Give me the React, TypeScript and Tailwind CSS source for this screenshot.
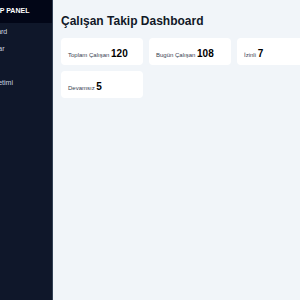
import React from "react";

const stats = [
  { label: "Toplam Çalışan", value: "120" },
  { label: "Bugün Çalışan", value: "108" },
  { label: "İzinli", value: "7" },
  { label: "Devamsız", value: "5" },
];

const menu = ["Dashboard", "Çalışanlar", "İzinler", "İzin Yönetimi"];

export default function App() {
  return (
    <div
      className="flex h-[300px] w-[300px] overflow-hidden bg-[#f1f5f9]"
      style={{ fontFamily: '"Liberation Sans", Arial, sans-serif' }}
    >
      <aside className="-ml-[47px] flex w-[100px] shrink-0 flex-col border-r border-[#334155] bg-[#0f172a]">
        <div className="flex h-[23px] items-center bg-[#020617] pb-[1px] pl-[37px] text-[7px] font-bold text-white">
          ERP PANEL
        </div>
        <nav className="flex flex-col">
          {menu.map((m) => (
            <div key={m} className="whitespace-nowrap pl-[20px] text-[7px] leading-[17px] text-[#cbd5e1]">
              {m}
            </div>
          ))}
        </nav>
      </aside>
      <main className="min-w-0 flex-1 pl-[8px] pt-[14px]">
        <h1 className="mb-[10px] whitespace-nowrap text-[12px] font-bold leading-[14px] text-[#111827]">
          Çalışan Takip Dashboard
        </h1>
        <div className="grid grid-cols-[repeat(3,82px)] gap-[6px]">
          {stats.map((s) => (
            <div key={s.label} className="flex h-[27px] items-center rounded-[4px] bg-white px-[7px]">
              <p className="whitespace-nowrap">
                <span className="text-[6px] text-[#374151]">{s.label} </span>
                <span className="text-[10px] font-bold text-black">{s.value}</span>
              </p>
            </div>
          ))}
        </div>
      </main>
    </div>
  );
}
